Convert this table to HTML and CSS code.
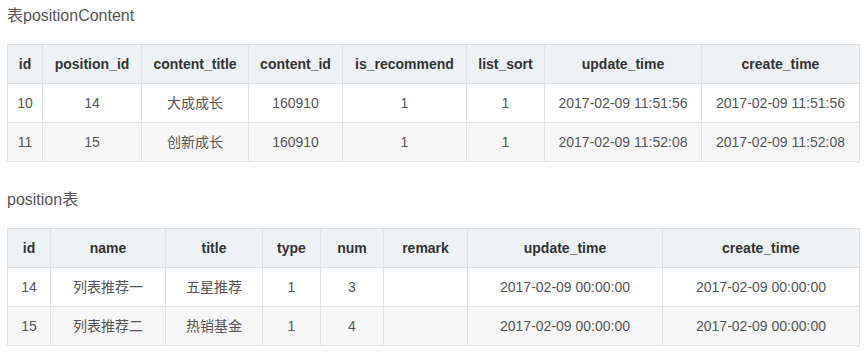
FILE: index.html
```html
<!DOCTYPE html>
<html lang="zh">
<head>
<meta charset="utf-8">
<title>tables</title>
<link rel="stylesheet" href="styles.css">
</head>
<body>
<div class="page">
  <p class="caption">表positionContent</p>
  <table class="data t1">
    <colgroup>
      <col class="c1"><col class="c2"><col class="c3"><col class="c4"><col class="c5"><col class="c6"><col class="c7"><col class="c8">
    </colgroup>
    <thead>
      <tr><th>id</th><th>position_id</th><th>content_title</th><th>content_id</th><th>is_recommend</th><th>list_sort</th><th>update_time</th><th>create_time</th></tr>
    </thead>
    <tbody>
      <tr><td>10</td><td>14</td><td>大成成长</td><td>160910</td><td>1</td><td>1</td><td>2017-02-09 11:51:56</td><td>2017-02-09 11:51:56</td></tr>
      <tr><td>11</td><td>15</td><td>创新成长</td><td>160910</td><td>1</td><td>1</td><td>2017-02-09 11:52:08</td><td>2017-02-09 11:52:08</td></tr>
    </tbody>
  </table>

  <p class="caption">position表</p>
  <table class="data t2">
    <colgroup>
      <col class="c1"><col class="c2"><col class="c3"><col class="c4"><col class="c5"><col class="c6"><col class="c7"><col class="c8">
    </colgroup>
    <thead>
      <tr><th>id</th><th>name</th><th>title</th><th>type</th><th>num</th><th>remark</th><th>update_time</th><th>create_time</th></tr>
    </thead>
    <tbody>
      <tr><td>14</td><td>列表推荐一</td><td>五星推荐</td><td>1</td><td>3</td><td></td><td>2017-02-09 00:00:00</td><td>2017-02-09 00:00:00</td></tr>
      <tr><td>15</td><td>列表推荐二</td><td>热销基金</td><td>1</td><td>4</td><td></td><td>2017-02-09 00:00:00</td><td>2017-02-09 00:00:00</td></tr>
    </tbody>
  </table>
</div>
</body>
</html>
```

FILE: styles.css
```css
html, body {
  margin: 0;
  padding: 0;
  background: #ffffff;
}

.page {
  padding: 4px 9px 0 7px;
  font-family: "Liberation Sans", Arial, "Noto Sans CJK SC", sans-serif;
  color: #555555;
}

.caption {
  margin: 0 0 16px;
  font-size: 16px;
  line-height: 24px;
  color: #555555;
}

.data {
  width: 852px;
  table-layout: fixed;
  border-collapse: collapse;
  font-size: 14px;
  line-height: 22px;
  margin: 0 0 26px;
}

.data th,
.data td {
  border: 1px solid #dfe2e5;
  padding: 8px 0;
  text-align: center;
  white-space: nowrap;
  overflow: hidden;
}

.data th {
  background: #eff2f5;
  color: #333333;
  font-weight: bold;
}

.data td {
  color: #555555;
}

.data tbody tr:nth-child(2) td {
  background: #f7f7f7;
}

.t1 .c1 { width: 35px; }
.t1 .c2 { width: 99px; }
.t1 .c3 { width: 107px; }
.t1 .c4 { width: 94px; }
.t1 .c5 { width: 124px; }
.t1 .c6 { width: 78px; }
.t1 .c7 { width: 157px; }
.t1 .c8 { width: 158px; }

.t2 .c1 { width: 43px; }
.t2 .c2 { width: 115px; }
.t2 .c3 { width: 97px; }
.t2 .c4 { width: 58px; }
.t2 .c5 { width: 63px; }
.t2 .c6 { width: 84px; }
.t2 .c7 { width: 195px; }
.t2 .c8 { width: 197px; }
```
